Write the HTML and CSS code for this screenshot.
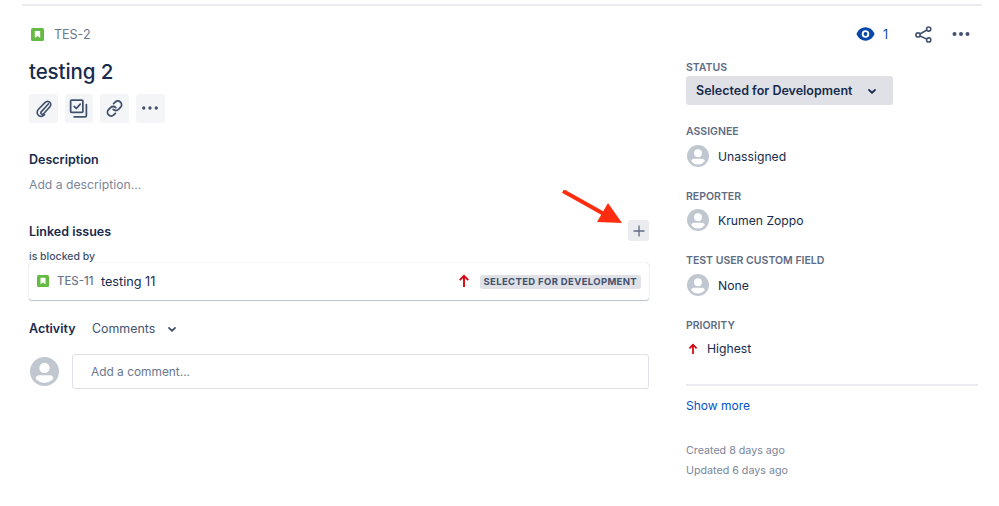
FILE: index.html
```html
<!DOCTYPE html>
<html lang="en">
<head>
<meta charset="utf-8">
<title>TES-2</title>
<link rel="stylesheet" href="styles.css">
</head>
<body>
<div class="page">
  <div class="layout">
    <main class="main">
      <div class="crumb">
        <svg class="type-icon type-icon-lg" viewBox="0 0 12 12"><rect width="12" height="12" rx="1.5" fill="#65ba43"/><path d="M3.5 2.8h5v6.4L6 7.4 3.5 9.2z" fill="#fff"/></svg>
        <span>TES-2</span>
      </div>
      <h1 class="title">testing 2</h1>
      <div class="tools">
        <button class="tool"><svg viewBox="0 0 24 24" width="21" height="21" fill="none" stroke="#42526e" stroke-width="1.9" stroke-linecap="round"><path d="M17.5 6.8 9.6 15.6c-.9 1-.8 2 0 2.6s1.700.6 2.500-.2l7-7.700c1.700-1.900 1.500-4.100-.1-5.500s-3.700-1.300-5.400.5L6.300 12.800c-2.200 2.500-2 5.300 0 7s4.700 1.500 6.800-.8"/></svg></button>
        <button class="tool"><svg viewBox="0 0 24 24" width="21" height="21" fill="none" stroke="#42526e" stroke-width="2" stroke-linejoin="round" stroke-linecap="round"><rect x="3" y="2.500" width="14" height="14" rx="1"/><path d="m7 9.500 2.500 2.500L14 7"/><path d="M21 7.500V20a1.500 1.500 0 0 1-1.500 1.500H7"/></svg></button>
        <button class="tool"><svg viewBox="0 0 24 24" width="21" height="21" fill="none" stroke="#42526e" stroke-width="2.100" stroke-linecap="round"><path d="m11 6.500 1.800-1.800a4.200 4.200 0 0 1 6 6L16.500 13a4.200 4.200 0 0 1-6 0"/><path d="m13 17.500-1.800 1.800a4.200 4.200 0 0 1-6-6L7.500 11a4.200 4.200 0 0 1 6 0"/></svg></button>
        <button class="tool"><svg viewBox="0 0 24 24" width="20" height="20" fill="#42526e"><circle cx="4.500" cy="12" r="2"/><circle cx="12" cy="12" r="2"/><circle cx="19.500" cy="12" r="2"/></svg></button>
      </div>

      <h2 class="heading desc-heading">Description</h2>
      <p class="placeholder">Add a description...</p>

      <div class="linked-head">
        <h2 class="heading linked-title">Linked issues</h2>
        <button class="add"><svg viewBox="0 0 14 14" width="14" height="14" stroke="#5e6c84" stroke-width="1.300"><path d="M7 1.500v11M1.500 7h11"/></svg></button>
      </div>
      <div class="relation">is blocked by</div>
      <div class="issue-card">
        <svg class="type-icon" viewBox="0 0 12 12"><rect width="12" height="12" rx="1.500" fill="#65ba43"/><path d="M3.500 2.800h5v6.400L6 7.400 3.500 9.200z" fill="#fff"/></svg>
        <span class="issue-key">TES-11</span>
        <span class="issue-name">testing 11</span>
        <svg class="up" viewBox="0 0 14 16" width="12" height="14" fill="none" stroke="#d8000c" stroke-width="2.200"><path d="M7 15V2M2 7l5-5 5 5"/></svg>
        <span class="lozenge">SELECTED FOR DEVELOPMENT</span>
      </div>

      <div class="activity">
        <h2 class="heading">Activity</h2>
        <span class="filter">Comments</span>
        <svg viewBox="0 0 24 24" width="18" height="18" fill="none" stroke="#42526e" stroke-width="2.500" stroke-linecap="round" stroke-linejoin="round"><path d="m8 10.500 4 4 4-4"/></svg>
      </div>
      <div class="comment-row">
        <svg class="avatar avatar-lg" viewBox="0 0 28 28"><use href="#person"/></svg>
        <div class="comment-box">Add a comment...</div>
      </div>
    </main>

    <aside class="side">
      <div class="actions">
        <svg viewBox="0 0 20 14" width="19" height="14"><path d="M10 0c5 0 8.500 4 9.500 7-1 3-4.500 7-9.500 7S1.500 10 .5 7C1.500 4 5 0 10 0z" fill="#0747a6"/><circle cx="10" cy="7" r="4" fill="#fff"/><circle cx="10" cy="7" r="2" fill="#0747a6"/></svg>
        <span class="watch-count">1</span>
        <svg class="share" viewBox="0 0 18 18" width="17" height="17" fill="none" stroke="#42526e" stroke-width="1.700"><circle cx="14.500" cy="3.200" r="2.200"/><circle cx="3.200" cy="9.500" r="2.200"/><circle cx="14.500" cy="14.800" r="2.200"/><path d="m5.200 8.400 7.400-4.100M5.200 10.500l7.400 3.400"/></svg>
        <svg class="more" viewBox="0 0 18 6" width="18" height="6" fill="#42526e"><circle cx="2.500" cy="3" r="2"/><circle cx="9" cy="3" r="2"/><circle cx="15.500" cy="3" r="2"/></svg>
      </div>

      <div class="label label-status">STATUS</div>
      <div class="status">
        <span>Selected for Development</span>
        <svg viewBox="0 0 24 24" width="18" height="18" fill="none" stroke="#172b4d" stroke-width="2.500" stroke-linecap="round" stroke-linejoin="round"><path d="m8 10.500 4 4 4-4"/></svg>
      </div>

      <div class="label label-first">ASSIGNEE</div>
      <div class="person"><svg class="avatar" viewBox="0 0 28 28"><use href="#person"/></svg><span>Unassigned</span></div>

      <div class="label label-field">REPORTER</div>
      <div class="person"><svg class="avatar" viewBox="0 0 28 28"><use href="#person"/></svg><span>Krumen Zoppo</span></div>

      <div class="label label-field">TEST USER CUSTOM FIELD</div>
      <div class="person"><svg class="avatar" viewBox="0 0 28 28"><use href="#person"/></svg><span>None</span></div>

      <div class="label label-field">PRIORITY</div>
      <div class="priority">
        <svg viewBox="0 0 14 16" width="10" height="12" fill="none" stroke="#d8000c" stroke-width="2.400"><path d="M7 15V2M2 7l5-5 5 5"/></svg>
        <span>Highest</span>
      </div>

      <hr class="rule">
      <a class="more-link" href="#">Show more</a>
      <div class="meta">Created 8 days ago</div>
      <div class="meta meta-next">Updated 6 days ago</div>
    </aside>
  </div>

  <svg class="red-arrow" viewBox="0 0 62 36" width="62" height="36"><path d="M1 1 42 24" stroke="#ff2d0f" stroke-width="4" fill="none"/><path d="M46 13 60 33 35 32z" fill="#ff2d0f"/></svg>

  <svg width="0" height="0" class="defs">
    <defs>
      <symbol id="person" viewBox="0 0 28 28">
        <circle cx="14" cy="14" r="14" fill="#c1c7d0"/>
        <circle cx="14" cy="10.500" r="5" fill="#fff"/>
        <path d="M5.500 21a3.500 3.500 0 0 1 3.500-3.500h10a3.500 3.500 0 0 1 3.500 3.500 11.500 11.500 0 0 1-17 0z" fill="#fff"/>
      </symbol>
    </defs>
  </svg>
</div>
</body>
</html>
```
FILE: styles.css
```css
* { box-sizing: border-box; }
html, body { margin: 0; padding: 0; background: #fff; }
body {
  font-family: Inter, "Liberation Sans", sans-serif;
  color: #172b4d;
  font-size: 13px;
  width: 999px;
  height: 506px;
  overflow: hidden;
}
.page {
  position: relative;
  margin: 4px 17px 0 22px;
  border-top: 2px solid #ebecf0;
  height: 502px;
}
.layout {
  display: grid;
  grid-template-columns: 620px 292px;
  column-gap: 37px;
  padding-left: 7px;
}
.crumb {
  display: flex;
  align-items: center;
  gap: 10px;
  margin: 21px 0 0 2px;
  height: 14px;
  color: #6b778c;
  font-size: 12.500px;
}
.type-icon { width: 12px; height: 12px; flex: none; }
.type-icon-lg { width: 13px; height: 13px; }
.title {
  margin: 18px 0 0;
  font-size: 20.500px;
  line-height: 26px;
  font-weight: 500;
  letter-spacing: -0.100px;
}
.tools { display: flex; gap: 7.200px; margin-top: 9px; }
.tool {
  width: 28.500px;
  height: 28.500px;
  padding: 0;
  border: 0;
  border-radius: 3px;
  background: #f4f5f7;
  display: flex;
  align-items: center;
  justify-content: center;
}
.heading { margin: 0; font-size: 12.500px; line-height: 16px; font-weight: 600; }
.desc-heading { margin-top: 29px; }
.placeholder { margin: 9px 0 0; font-size: 12.200px; line-height: 16px; color: #7a869a; }
.linked-head {
  display: flex;
  justify-content: space-between;
  align-items: center;
  margin-top: 27px;
  height: 22px;
}
.linked-title { margin-top: 2px; }
.add {
  width: 21px;
  height: 21px;
  padding: 0;
  border: 0;
  border-radius: 3px;
  background: #ebecf0;
  display: flex;
  align-items: center;
  justify-content: center;
}
.relation { margin-top: 8px; font-size: 10.500px; line-height: 13px; font-weight: 500; color: #42526e; }
.issue-card {
  display: flex;
  align-items: center;
  height: 37px;
  margin-top: 0;
  padding: 0 8px;
  background: #fff;
  border-radius: 3px;
  box-shadow: 0 1px 1px rgba(9,30,66,.25), 0 0 1px rgba(9,30,66,.31);
}
.issue-key { margin-left: 8px; font-size: 11.400px; font-weight: 500; color: #6b778c; }
.issue-name { margin-left: 7.500px; font-size: 12.700px; }
.up { margin-left: auto; }
.lozenge {
  margin-left: 10px;
  margin-top: 1px;
  padding: 0 4px;
  height: 14px;
  line-height: 14px;
  border-radius: 3px;
  background: #dfe1e6;
  color: #42526e;
  font-size: 9.500px;
  font-weight: 700;
  letter-spacing: .35px;
}
.activity { display: flex; align-items: center; margin-top: 20px; height: 18px; }
.filter { margin-left: 16.500px; margin-right: 8px; font-size: 12.400px; color: #42526e; }
.comment-row { display: flex; align-items: center; gap: 13px; margin-top: 16.500px; }
.avatar { width: 22px; height: 22px; flex: none; display: block; }
.avatar-lg { width: 29px; height: 29px; margin-left: 1px; }
.comment-box {
  flex: 1;
  height: 35px;
  padding: 0 18px;
  display: flex;
  align-items: center;
  border: 1px solid #dfe1e6;
  border-radius: 3px;
  font-size: 11.900px;
  color: #6b778c;
}
.actions {
  display: flex;
  align-items: center;
  justify-content: flex-end;
  height: 18px;
  margin-top: 19px;
}
.watch-count { margin-left: 8px; font-size: 12.500px; color: #0747a6; }
.share { margin-left: 27px; }
.more { margin-left: 20px; margin-right: 8px; }
.label { font-size: 10.500px; line-height: 13px; font-weight: 600; color: #5e6c84; }
.label-status { margin-top: 18px; }
.label-first { margin-top: 20px; }
.label-field { margin-top: 23px; }
.status {
  display: flex;
  align-items: center;
  justify-content: space-between;
  width: 207px;
  height: 29px;
  margin-top: 2px;
  margin-left: -.5px;
  padding: 0 12px 0 10.500px;
  border-radius: 3px;
  background: #dfe1e6;
  font-size: 12.500px;
  font-weight: 600;
}
.person { display: flex; align-items: center; gap: 9px; height: 22px; margin-top: 6.500px; padding-left: 1px; font-size: 12.200px; }
.person span { padding-top: 1px; }
.priority { display: flex; align-items: center; gap: 9px; margin-top: 9px; height: 16px; padding-left: 2px; font-size: 12.200px; }
.rule { border: 0; height: 2px; background: #ebecf0; margin: 27px 0 0; }
.more-link { display: block; margin-top: 12px; font-size: 12px; line-height: 16px; color: #0052cc; text-decoration: none; }
.meta { margin-top: 30px; font-size: 10.700px; line-height: 14px; color: #7a869a; }
.meta-next { margin-top: 6px; }
.red-arrow { position: absolute; left: 540px; top: 184px; }
.defs { position: absolute; }
```
